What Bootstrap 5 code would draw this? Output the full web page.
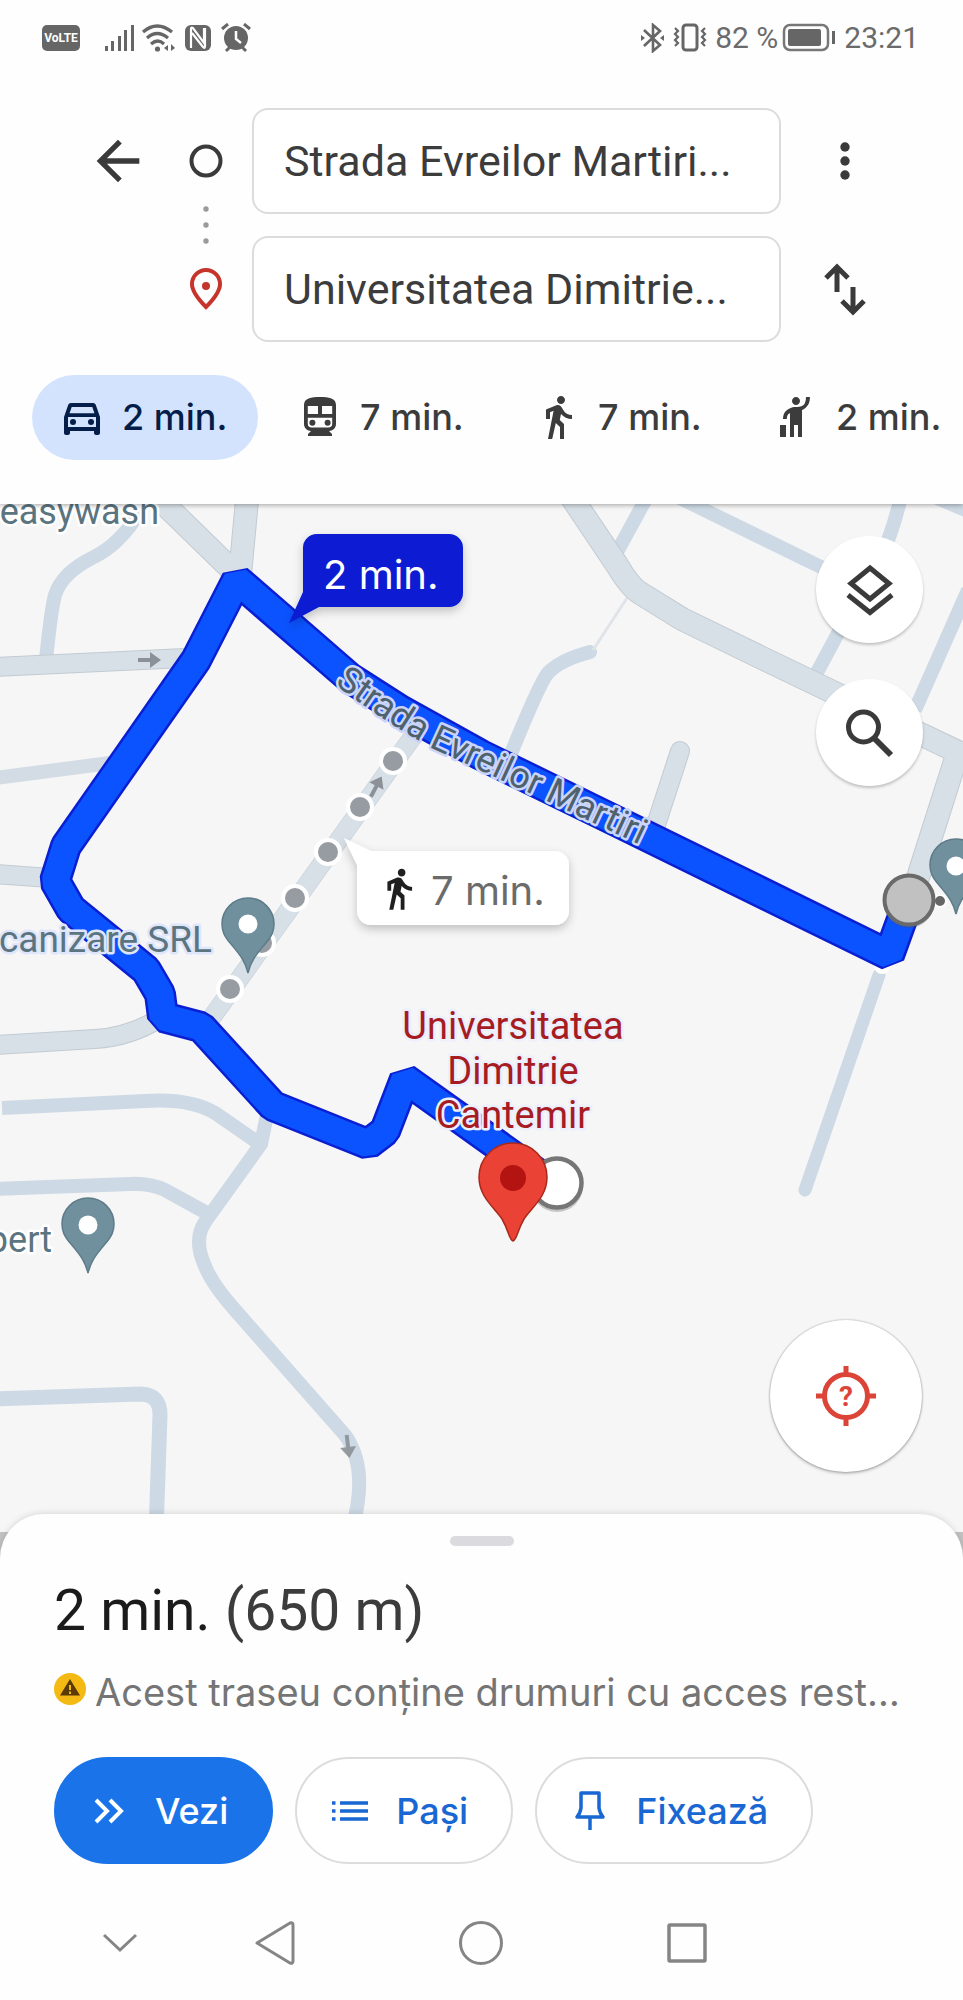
<!DOCTYPE html>
<html lang="ro">
<head>
<meta charset="utf-8">
<meta name="viewport" content="width=device-width, initial-scale=1">
<title>Traseu</title>
<link href="https://cdn.jsdelivr.net/npm/bootstrap@5.3.0/dist/css/bootstrap.min.css" rel="stylesheet">
<style>
  body { font-family: Roboto, "Liberation Sans", sans-serif; color: #3c4043; background: #fefefe; }
  svg { display: block; flex-shrink: 0; }
  button { color: inherit; }
  .spaced-face { font-family: Inter, "Liberation Sans", sans-serif; }

  .status-bar { height: 76px; padding: 0 44px 0 42px; color: #6b6b6b; font-size: 30px; line-height: 32px; }
  .volte { width: 38px; background: #666; color: #fff; font-size: 12px; line-height: 26px; font-weight: 700; border-radius: 5px; text-align: center; }

  .top-panel { z-index: 2; background: #fefefe; box-shadow: 0 1px 5px rgba(0,0,0,.35); padding-bottom: 44px; }
  .route-form { display: grid; grid-template-columns: 84px 92px 1fr 128px; grid-template-rows: 106px 106px; row-gap: 22px; padding: 32px 54px 33px 76px; align-items: center; justify-items: center; }
  .route-marks { grid-column: 2; grid-row: 1 / 3; }
  .route-form .form-control { grid-column: 3; height: 106px; border: 2px solid #dcdcdc; border-radius: 16px; padding: 0 30px; font-size: 43px; color: #3c3c3c; background: #fff; text-overflow: ellipsis; }
  .plain-btn { background: none; border: 0; padding: 0; color: #3a3a3a; }

  .mode-strip { gap: 12px; padding: 0 32px; overflow: hidden; }
  .mode-btn { flex: 0 0 226px; height: 85px; border: 0; border-radius: 43px; background: none; padding: 0 0 2px 26px; gap: 16px; font-size: 36px; font-weight: 500; line-height: 48px; color: #3c3c3c; white-space: nowrap; }
  .mode-btn.active { background: #d3e3fd; color: #041e49; }

  .map-area { background: #f6f6f6; }
  .map-tools { top: 32px; right: 40px; gap: 36px; }
  .map-locate { bottom: 60px; right: 41px; }
  .round-btn { width: 107px; height: 107px; border: 0; border-radius: 50%; background: #fff; color: #3a3a3a; box-shadow: 0 2px 3px rgba(0,0,0,.22); padding: 0; }
  .round-btn.big { width: 152px; height: 152px; color: #db4437; box-shadow: 0 0 2px rgba(0,0,0,.4), 0 2px 3px rgba(0,0,0,.2); }

  .sheet-back { background: #c2c2c2; }
  .sheet { z-index: 2; margin-top: -18px; background: #fefefe; border-radius: 44px 44px 0 0; box-shadow: 0 -1px 6px rgba(0,0,0,.12); padding-top: 22px; }
  .handle { width: 64px; height: 10px; border-radius: 5px; background: #dadadf; }
  .sheet-body { padding: 33px 54px 0; }
  .trip-title { font-size: 57px; line-height: 64px; font-weight: 400; color: #3c3c3c; margin: 0 0 25px; }
  .trip-title b { font-weight: 400; color: #1b1b1b; }
  .trip-note { font-size: 38px; line-height: 48px; color: #757575; margin: 0 -30px 41px 0; gap: 9px; white-space: nowrap; }
  .action-row { gap: 22px; }
  .action-btn { height: 107px; border: 2px solid #dcdcdc; border-radius: 54px; padding: 0 43px 0 35px; gap: 28px; font-size: 36px; font-weight: 500; background: #fff; color: #1967d2; --bs-btn-line-height: 1; }
  .action-btn.main { background: #1a73e8; border-color: #1a73e8; color: #fff; }
  .system-nav { display: grid; grid-template-columns: 68fr 104fr 206fr 206fr 206fr 173fr; height: 136px; padding-top: 22px; align-items: center; justify-items: center; }
  .system-nav .plain-btn { color: #858585; }
</style>
</head>
<body>
<div class="d-flex flex-column min-vh-100">

<header class="top-panel position-relative">
  <div class="status-bar d-flex align-items-center justify-content-between">
    <div class="d-flex align-items-center">
      <span class="volte me-4">VoLTE</span>
      <svg width="32" height="28" viewBox="0 0 32 28" fill="#666"><path d="M1 22h3v5H1zM7 17h3v10H7zM14 12h3v15h-3zM20 6h3v21h-3zM27 1h3v26h-3z"/></svg>
      <svg class="ms-1 me-1" width="36" height="30" viewBox="0 0 36 30" fill="none" stroke="#666" stroke-width="3.2"><path d="M3 9q14-12 29 0M7 15q10-9 21 0M11 21q7-6 13 0"/><circle cx="17.500" cy="26" r="2.600" fill="#666" stroke="none"/><path d="M28 22v6l-4-3zM31 21v7l4-3z" fill="#666" stroke="none"/></svg>
      <svg class="ms-1" width="28" height="28" viewBox="0 0 28 28"><rect x="1" y="1" width="26" height="26" rx="6" fill="#666"/><path d="M7 24V5q0-2 2-1l11 15V4M21 4v18q0 3-2 1L8 9" fill="none" stroke="#fefefe" stroke-width="2.200"/></svg>
      <svg class="ms-2" width="32" height="30" viewBox="0 0 32 30"><circle cx="16" cy="15" r="12" fill="#666"/><path d="M2 6l6-5M30 6l-6-5M6 28l4-4M26 28l-4-4" stroke="#666" stroke-width="3"/><path d="M16 8v8l5 4" fill="none" stroke="#fff" stroke-width="2.500"/></svg>
    </div>
    <div class="d-flex align-items-center">
      <svg width="24" height="30" viewBox="0 0 24 30" fill="none" stroke="#666" stroke-width="2.600"><path d="M3 7l16 15-7 6V2l7 6L3 23"/><path d="M0 12l4 3-4 3zM23 12l-4 3 4 3z" fill="#666" stroke="none"/></svg>
      <svg class="mx-2" width="34" height="30" viewBox="0 0 34 30" fill="none" stroke="#666"><rect x="10" y="2" width="14" height="25" rx="3" stroke-width="3"/><path d="M2 5l3 3-3 3 3 3-3 3 3 3-3 3M32 5l-3 3 3 3-3 3 3 3-3 3 3 3" stroke-width="2.200"/></svg>
      <span>82 %</span>
      <svg class="ms-1 me-2" width="54" height="30" viewBox="0 0 54 30"><rect x="2" y="2" width="44" height="25" rx="6" fill="none" stroke="#777" stroke-width="2.500"/><rect x="6" y="6" width="33" height="17" rx="2" fill="#666"/><path d="M50 8h3v13h-3z" fill="#666"/></svg>
      <span>23:21</span>
    </div>
  </div>

  <form class="route-form">
    <button type="button" class="plain-btn" aria-label="Înapoi"><svg width="64" height="64" viewBox="0 0 24 24" fill="currentColor"><path d="M20 11H7.830l5.590-5.590L12 4l-8 8 8 8 1.410-1.410L7.830 13H20z"/></svg></button>
    <svg class="route-marks" width="40" height="234" viewBox="0 0 40 234" fill="none">
      <circle cx="20" cy="53" r="14.500" stroke="#3a3a3a" stroke-width="4"/>
      <g fill="#9a9a9a"><circle cx="20" cy="101" r="2.700"/><circle cx="20" cy="117" r="2.700"/><circle cx="20" cy="133" r="2.700"/></g>
      <path d="M20 199q-14-14-14-23a14 14 0 0 1 28 0q0 9-14 23z" stroke="#c5352b" stroke-width="4"/><circle cx="20" cy="178" r="4" fill="#c5352b"/>
    </svg>
    <input class="form-control" type="text" aria-label="Punct de plecare" value="Strada Evreilor Martiri...">
    <button type="button" class="plain-btn" aria-label="Mai multe opțiuni"><svg width="20" height="44" viewBox="0 0 20 44" fill="currentColor"><circle cx="10" cy="8" r="4.700"/><circle cx="10" cy="22" r="4.700"/><circle cx="10" cy="36" r="4.700"/></svg></button>
    <input class="form-control" type="text" aria-label="Destinație" value="Universitatea Dimitrie...">
    <button type="button" class="plain-btn" aria-label="Inversează"><svg width="44" height="56" viewBox="0 0 44 56" fill="none" stroke="currentColor" stroke-width="5"><path d="M14 31V6M3 17L14 6l11 11M30 26v24M19 40l11 11 11-11"/></svg></button>
  </form>

  <nav class="mode-strip spaced-face d-flex" aria-label="Mijloc de transport">
    <button class="mode-btn active d-flex align-items-center"><svg width="48" height="48" viewBox="0 0 24 24" fill="currentColor"><path d="M18.920 6.010C18.720 5.420 18.160 5 17.500 5h-11c-.66 0-1.210.42-1.420 1.010L3 12v8c0 .55.45 1 1 1h1c.55 0 1-.45 1-1v-1h12v1c0 .55.45 1 1 1h1c.55 0 1-.45 1-1v-8l-2.080-5.990zM6.850 7h10.290l1.080 3.110H5.770L6.850 7zM19 17H5v-5h14v5z"/><circle cx="7.500" cy="14.500" r="1.500"/><circle cx="16.500" cy="14.500" r="1.500"/></svg>2 min.</button>
    <button class="mode-btn d-flex align-items-center"><svg width="48" height="48" viewBox="0 0 24 24" fill="currentColor"><path fill-rule="evenodd" d="M12 2C7.580 2 4 2.500 4 6v9.500C4 17.430 5.570 19 7.500 19L6 20.500V21.500h12v-1L16.500 19c1.930 0 3.500-1.570 3.500-3.500V6c0-3.500-3.580-4-8-4zM5.900 6.500H11v4H5.900zM13 6.500h5.100v4H13zM5.900 12.400h12.200v3q0 1.900-2 1.900H7.900q-2 0-2-1.900z"/><circle cx="8.200" cy="14.900" r="1.500"/><circle cx="15.800" cy="14.900" r="1.500"/></svg>7 min.</button>
    <button class="mode-btn d-flex align-items-center"><svg width="48" height="48" viewBox="0 0 24 24" fill="currentColor"><path d="M13.500 5.500c1.100 0 2-.9 2-2s-.9-2-2-2-2 .9-2 2 .9 2 2 2zM9.800 8.900L7 23h2.100l1.800-8 2.100 2v6h2v-7.500l-2.100-2 .6-3C14.800 12 16.800 13 19 13v-2c-1.900 0-3.500-1-4.300-2.400l-1-1.600c-.4-.6-1-1-1.700-1-.3 0-.5.1-.8.1L6 8.300V13h2V9.600l1.800-.7"/></svg>7 min.</button>
    <button class="mode-btn d-flex align-items-center"><svg width="48" height="48" viewBox="0 0 24 24" fill="currentColor"><path d="M12 6c1.100 0 2-.9 2-2s-.9-2-2-2-2 .9-2 2 .9 2 2 2zm5-4h2c0 2.700-.93 4.410-2.300 5.500-.84.68-1.320.86-1.700 1V22h-2v-6h-2v6H9V10.100c-.3.1-.5.2-.6.3-.53.41-.95 1-1 2.600H5.500c0-2 .67-3.460 1.900-4.400C8.210 8 9.500 7 12 7c2.500 0 3.220-.5 3.900-1.100C16.430 5.420 17 4 17 2zM4 16h3v6H4v-6z"/></svg>2 min.</button>
  </nav>
</header>

<main class="map-area position-relative">
  <svg class="w-100" viewBox="0 504 963 1028" role="img" aria-label="Harta traseului">
    <defs>
      <path id="poi" d="M0 49C-3 36-9 30-17 20-24 12-26 7-26 0a26 26 0 0 1 52 0C26 7 24 12 17 20 9 30 3 36 0 49z" fill="#71909d" stroke="#5d7b88" stroke-width="1.500"/>
      <path id="street" d="M334 684Q392 727 436 750L553 804L670 859"/>
      <path id="oneway" d="M-11-2H1v-6L12 0 1 8V2h-12z" fill="#8b9196"/>
      <filter id="soft" x="-20%" y="-30%" width="140%" height="180%"><feDropShadow dx="0" dy="4" stdDeviation="5" flood-opacity=".22"/></filter>
      <g id="wide-roads">
        <path d="M155 495L236 574M247 500L240 575"/>
        <path d="M-5 667L185 658" stroke-width="20"/>
        <path d="M-5 874L50 878M-5 1045L95 1039Q130 1037 160 1018" stroke-width="20"/>
        <path d="M210 1020L414 735" stroke-width="19"/>
        <path d="M570 495L617 565Q630 587 640 593L682 619L760 657L870 710L958 752L914 890"/>
        <path d="M680 751L655 828" stroke-width="20" stroke-linecap="round"/>
      </g>
    </defs>

    <g fill="none" stroke="#cdd9e4" stroke-width="14">
      <path d="M141 510Q120 545 92 558Q62 573 55 595Q51 610 46 660"/>
      <path d="M-5 778L110 763" stroke="#d3dce5"/>
      <path d="M2 1108L145 1101Q190 1098 215 1113L260 1144"/>
      <path d="M-5 1189L130 1184Q150 1183 165 1190L205 1212"/>
      <path d="M267 1115L261 1144L205 1222Q193 1240 205 1266Q212 1284 235 1310L345 1435Q370 1470 351 1532"/>
      <path d="M-5 1399L140 1394Q160 1394 160 1415L156 1532" stroke-width="15"/>
      <path d="M647 497L617 552M678 497L825 569M901 497Q894 525 888 540L814 678M935 497L970 512M968 590L915 710"/>
      <path d="M590 652Q560 660 548 673Q540 682 510 756" stroke-linecap="round"/>
      <path d="M879 975L805 1190" stroke-linecap="round" stroke-width="13"/>
      <path d="M627 598L593 650" stroke="#e0e4e9" stroke-width="3"/>
    </g>
    <use href="#wide-roads" fill="none" stroke="#c2cbd2" stroke-width="24"/>
    <g fill="none" stroke="#d8e0e7">
      <path d="M155 495L236 574M247 500L240 575M570 495L617 565Q630 587 640 593L682 619L760 657L870 710L958 752L914 890" stroke-width="22"/>
      <path d="M-5 667L185 658M-5 874L50 878M-5 1045L95 1039Q130 1037 160 1018" stroke-width="18"/>
      <path d="M210 1020L414 735" stroke-width="18"/>
      <path d="M680 751L655 828" stroke-width="18" stroke-linecap="round"/>
    </g>
    <use href="#oneway" x="149" y="660"/>
    <use href="#oneway" transform="translate(376 787) rotate(-62)"/>
    <use href="#oneway" transform="translate(348 1446) rotate(83)" opacity=".9"/>

    <g fill="#979ca3" stroke="#fff" stroke-width="4">
      <circle cx="230" cy="989" r="12"/><circle cx="262" cy="943" r="12"/><circle cx="295" cy="898" r="12"/><circle cx="328" cy="852" r="12"/><circle cx="360" cy="807" r="12"/><circle cx="393" cy="761" r="12"/>
    </g>

    <circle cx="882" cy="966" r="8" fill="#fff"/>
    <g fill="none" stroke-linejoin="bevel">
      <path stroke="#0a1fd2" stroke-width="32" d="M545 1179L405 1079L385 1131L368 1144L273 1106L201 1027L163 1017L160 994L146 970L71 909L55 881L66 846L196 660L237 580L350 678L400 710L481 755L620 823L889 955L909 900"/>
      <path stroke="#0b53fe" stroke-width="27" d="M545 1179L405 1079L385 1131L368 1144L273 1106L201 1027L163 1017L160 994L146 970L71 909L55 881L66 846L196 660L237 580L350 678L400 710L481 755L620 823L889 955L909 900"/>
    </g>

    <g font-family="Roboto, sans-serif" font-size="36" fill="#5b7580" stroke="#fff" stroke-width="5" stroke-linejoin="round" paint-order="stroke">
      <text x="159" y="524" text-anchor="end">easywash</text>
      <text x="212" y="952" text-anchor="end" font-size="37" stroke="#dfe6fb">canizare SRL</text>
      <text x="52" y="1252" text-anchor="end">pert</text>
      <text fill="#4e626e" stroke="#cbd5fa"><textPath href="#street">Strada Evreilor Martiri</textPath></text>
    </g>
    <g font-family="Roboto, sans-serif" font-size="38" fill="#a61c22" stroke="#eceffc" stroke-width="5" stroke-linejoin="round" paint-order="stroke" text-anchor="middle">
      <text x="513" y="1039">Universitatea</text>
      <text x="513" y="1084">Dimitrie</text>
      <text x="513" y="1128">Cantemir</text>
    </g>

    <g><use href="#poi" x="248" y="924"/><circle cx="248" cy="924" r="9.500" fill="#fff"/></g>
    <g><use href="#poi" x="88" y="1224"/><circle cx="88" cy="1225" r="9.500" fill="#fff"/></g>
    <circle cx="940" cy="901" r="6" fill="#666" stroke="#fff" stroke-width="2"/>
    <g><use href="#poi" x="956" y="865"/><circle cx="956" cy="866" r="9.500" fill="#fff"/></g>
    <circle cx="909" cy="903" r="25" fill="#555" opacity=".3"/>
    <circle cx="909" cy="900" r="24.500" fill="#c1c1c1" stroke="#6a6a6a" stroke-width="4"/>
    <circle cx="557" cy="1186" r="26" fill="#555" opacity=".3"/>
    <circle cx="557" cy="1183" r="24.500" fill="#fff" stroke="#767676" stroke-width="4.500"/>
    <path d="M513 1241C509 1240 509 1231 502 1219 494 1207 479 1197 479 1177a34 34 0 0 1 68 0C547 1197 532 1207 524 1219 517 1231 517 1240 513 1241z" fill="#ea4234" stroke="#a8281c" stroke-width="1.500"/>
    <circle cx="513" cy="1178" r="13" fill="#b31412"/>

    <g filter="url(#soft)">
      <path d="M317 534H449a14 14 0 0 1 14 14V593a14 14 0 0 1-14 14H319L289 623 303 592V548a14 14 0 0 1 14-14z" fill="#071bd3"/>
      <path d="M371 851H555a14 14 0 0 1 14 14V911a14 14 0 0 1-14 14H371a14 14 0 0 1-14-14V865L344 838z" fill="#fff"/>
    </g>
    <g font-family="Inter, sans-serif" font-size="40">
      <text x="323" y="589" fill="#fff">2 min.</text>
      <text x="431" y="905" fill="#6b6b6b">7 min.</text>
    </g>
    <path transform="translate(376 866) scale(1.900)" fill="#1f1f1f" d="M13.500 5.500c1.100 0 2-.9 2-2s-.9-2-2-2-2 .9-2 2 .9 2 2 2zM9.800 8.900L7 23h2.100l1.800-8 2.100 2v6h2v-7.500l-2.100-2 .6-3C14.800 12 16.800 13 19 13v-2c-1.900 0-3.500-1-4.300-2.400l-1-1.600c-.4-.6-1-1-1.700-1-.3 0-.5.1-.8.1L6 8.300V13h2V9.600l1.800-.7"/>
  </svg>

  <div class="map-tools position-absolute d-flex flex-column">
    <button class="round-btn d-flex align-items-center justify-content-center" aria-label="Straturi"><svg width="50" height="54" viewBox="0 0 50 54" fill="none" stroke="currentColor" stroke-width="5"><path d="M25 5l19 15.500L25 36 6 20.500zM3 32l22 17.500L47 32"/></svg></button>
    <button class="round-btn d-flex align-items-center justify-content-center" aria-label="Caută"><svg width="50" height="50" viewBox="0 0 50 50" fill="none" stroke="currentColor" stroke-width="5"><circle cx="18.500" cy="19" r="15"/><path d="M29 30l17 17" stroke-width="6"/></svg></button>
  </div>
  <div class="map-locate position-absolute">
    <button class="round-btn big d-flex align-items-center justify-content-center" aria-label="Locația mea"><svg width="60" height="60" viewBox="0 0 60 60" fill="none" stroke="currentColor" stroke-width="5"><circle cx="30" cy="30" r="21.500"/><path d="M30 0v9M30 51v9M0 30h9M51 30h9"/><text x="30" y="40" text-anchor="middle" font-family="Roboto, sans-serif" font-size="28" font-weight="700" fill="currentColor" stroke="none">?</text></svg></button>
  </div>
</main>

<div class="sheet-back flex-grow-1 d-flex flex-column">
<section class="sheet position-relative flex-grow-1">
  <div class="handle mx-auto"></div>
  <div class="sheet-body">
    <h1 class="trip-title"><b>2 min.</b> (650 m)</h1>
    <p class="trip-note spaced-face d-flex"><svg width="32" height="42" viewBox="0 0 32 42"><circle cx="16" cy="21" r="16" fill="#f5b914"/><path d="M16 11l10 16.500H6z" fill="#5a3a05"/><path d="M16 17v5M16 23.500v2.500" stroke="#f5b914" stroke-width="2"/></svg><span>Acest traseu conține drumuri cu acces rest…</span></p>
    <div class="action-row spaced-face d-flex">
      <button class="btn action-btn main d-flex align-items-center"><svg width="36" height="36" viewBox="0 0 36 36" fill="none" stroke="currentColor" stroke-width="4"><path d="M5 7l11 11L5 29M19 7l11 11-11 11"/></svg>Vezi</button>
      <button class="btn action-btn d-flex align-items-center"><svg width="36" height="36" viewBox="0 0 36 36" fill="none" stroke="currentColor" stroke-width="3.500"><path d="M8 10h28M8 18h28M8 26h28M0 10h3.500M0 18h3.500M0 26h3.500"/></svg>Pași</button>
      <button class="btn action-btn d-flex align-items-center"><svg width="36" height="40" viewBox="0 0 36 40" fill="none" stroke="currentColor" stroke-width="3.500" stroke-linejoin="round"><path d="M9 2h18v15q1 6 4 9H5q3-3 4-9zM18 26v13"/></svg>Fixează</button>
    </div>
  </div>
  <nav class="system-nav" aria-label="Navigare sistem">
    <span></span>
    <button class="plain-btn" aria-label="Ascunde"><svg width="36" height="24" viewBox="0 0 36 24" fill="none" stroke="currentColor" stroke-width="3"><path d="M2 4l16 15L34 4"/></svg></button>
    <button class="plain-btn" aria-label="Înapoi"><svg width="40" height="46" viewBox="0 0 40 46" fill="none" stroke="currentColor" stroke-width="3" stroke-linejoin="round"><path d="M2 23L35 3q3-1 3 2v36q0 3-3 2z"/></svg></button>
    <button class="plain-btn" aria-label="Acasă"><svg width="46" height="46" viewBox="0 0 46 46" fill="none" stroke="currentColor" stroke-width="3"><circle cx="23" cy="23" r="20.500"/></svg></button>
    <button class="plain-btn" aria-label="Recente"><svg width="42" height="42" viewBox="0 0 42 42" fill="none" stroke="currentColor" stroke-width="3.500"><rect x="3" y="3" width="36" height="36" rx="1"/></svg></button>
  </nav>
</section>
</div>
</div>
<script src="https://cdn.jsdelivr.net/npm/bootstrap@5.3.0/dist/js/bootstrap.bundle.min.js"></script>
</body>
</html>
